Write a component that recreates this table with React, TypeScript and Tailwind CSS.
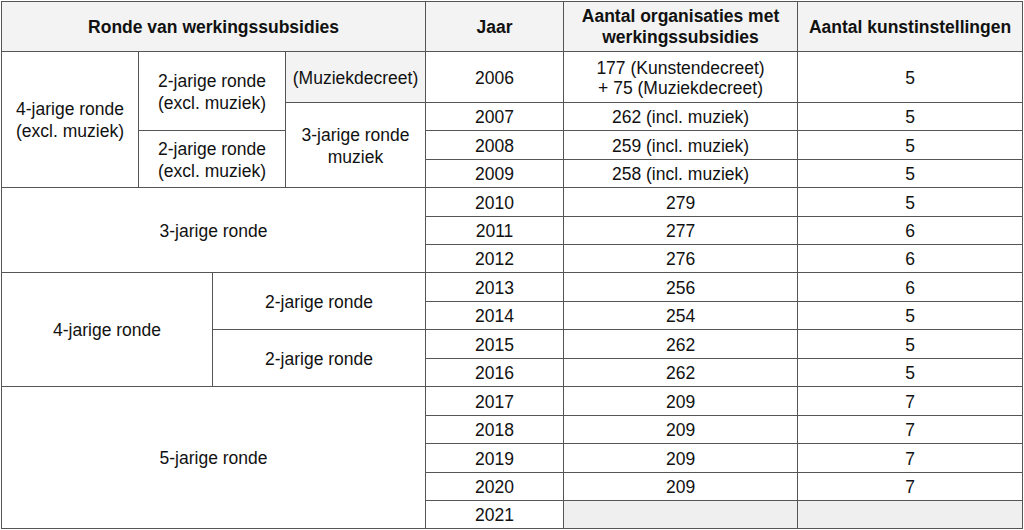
const cell = "border border-[#555] text-center align-middle px-1 pt-px";
const gray = "bg-[#efefef]";

const years = [
  { year: "2006", orgs: ["177 (Kunstendecreet)", "+ 75 (Muziekdecreet)"], arts: "5" },
  { year: "2007", orgs: ["262 (incl. muziek)"], arts: "5" },
  { year: "2008", orgs: ["259 (incl. muziek)"], arts: "5" },
  { year: "2009", orgs: ["258 (incl. muziek)"], arts: "5" },
  { year: "2010", orgs: ["279"], arts: "5" },
  { year: "2011", orgs: ["277"], arts: "6" },
  { year: "2012", orgs: ["276"], arts: "6" },
  { year: "2013", orgs: ["256"], arts: "6" },
  { year: "2014", orgs: ["254"], arts: "5" },
  { year: "2015", orgs: ["262"], arts: "5" },
  { year: "2016", orgs: ["262"], arts: "5" },
  { year: "2017", orgs: ["209"], arts: "7" },
  { year: "2018", orgs: ["209"], arts: "7" },
  { year: "2019", orgs: ["209"], arts: "7" },
  { year: "2020", orgs: ["209"], arts: "7" },
  { year: "2021", orgs: [], arts: "" },
];

// row heights, written out so tailwind picks them up
const heights = [
  "h-[51px]", "h-[28px]", "h-[29px]", "h-[28px]", "h-[29px]", "h-[28px]",
  "h-[28px]", "h-[29px]", "h-[28px]", "h-[29px]", "h-[28px]", "h-[29px]",
  "h-[28px]", "h-[29px]", "h-[28px]", "h-[28px]",
];

function Rounds({ index }: { index: number }) {
  // left-hand cells with row/col spans, keyed by the row they start in
  switch (index) {
    case 0:
      return (
        <>
          <td rowSpan={4} className={`${cell} leading-[22px]`}>4-jarige ronde<br />(excl. muziek)</td>
          <td rowSpan={2} colSpan={2} className={`${cell} leading-[22px]`}>2-jarige ronde<br />(excl. muziek)</td>
          <td className={`${cell} bg-[#f3f3f3] whitespace-nowrap`}>(Muziekdecreet)</td>
        </>
      );
    case 1:
      return <td rowSpan={3} className={`${cell} leading-[22px]`}>3-jarige ronde<br />muziek</td>;
    case 2:
      return <td rowSpan={2} colSpan={2} className={`${cell} leading-[22px]`}>2-jarige ronde<br />(excl. muziek)</td>;
    case 4:
      return <td rowSpan={3} colSpan={4} className={cell}>3-jarige ronde</td>;
    case 7:
      return (
        <>
          <td rowSpan={4} colSpan={2} className={cell}>4-jarige ronde</td>
          <td rowSpan={2} colSpan={2} className={cell}>2-jarige ronde</td>
        </>
      );
    case 9:
      return <td rowSpan={2} colSpan={2} className={cell}>2-jarige ronde</td>;
    case 11:
      return <td rowSpan={5} colSpan={4} className={cell}>5-jarige ronde</td>;
    default:
      return null;
  }
}

export default function App() {
  return (
    <div className="w-[1024px] h-[530px] bg-white pl-px pt-px font-['Liberation_Sans',Arial,sans-serif] text-[17.5px] leading-5 text-[#111]">
      <table className="table-fixed border-collapse w-[1021px]">
        <colgroup>
          <col className="w-[137px]" />
          <col className="w-[74px]" />
          <col className="w-[73px]" />
          <col className="w-[140px]" />
          <col className="w-[138px]" />
          <col className="w-[234px]" />
          <col className="w-[225px]" />
        </colgroup>
        <thead>
          <tr className="h-[50px] bg-[#f3f3f3]">
            <th colSpan={4} className={`${cell} font-bold`}>Ronde van werkingssubsidies</th>
            <th className={`${cell} font-bold`}>Jaar</th>
            <th className={`${cell} font-bold leading-[21px]`}>Aantal organisaties met<br />werkingssubsidies</th>
            <th className={`${cell} font-bold whitespace-nowrap px-0`}>Aantal kunstinstellingen</th>
          </tr>
        </thead>
        <tbody>
          {years.map((row, i) => (
            <tr key={row.year} className={heights[i]}>
              <Rounds index={i} />
              <td className={cell}>{row.year}</td>
              <td className={row.orgs.length ? cell : `${cell} ${gray}`}>
                {row.orgs.map((line, j) => (
                  <div key={j}>{line}</div>
                ))}
              </td>
              <td className={row.arts ? cell : `${cell} ${gray}`}>{row.arts}</td>
            </tr>
          ))}
        </tbody>
      </table>
    </div>
  );
}
